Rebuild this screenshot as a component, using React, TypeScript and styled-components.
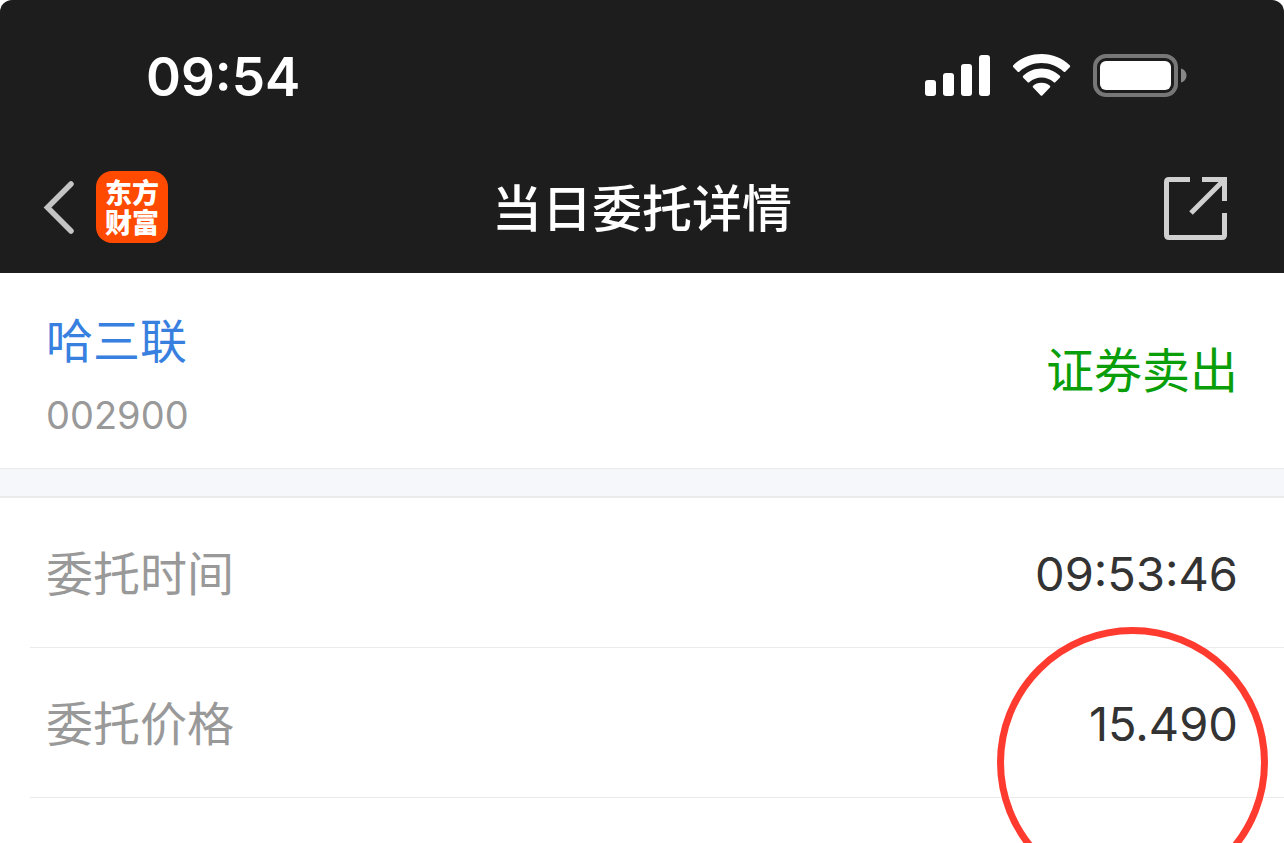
import React from "react";
import styled, { createGlobalStyle } from "styled-components";

const GlobalStyle = createGlobalStyle`
  * { box-sizing: border-box; }
  body {
    margin: 0;
    background: #fff;
    font-family: Inter, "Noto Sans CJK SC", sans-serif;
  }
`;

const Screen = styled.div`
  display: flex;
  flex-direction: column;
  height: 100vh;
  overflow: hidden;
  background: #fff;
`;

const TopArea = styled.header`
  background: #1d1d1d;
  color: #fff;
  border-radius: 12px 12px 0 0;
  flex: none;
`;

const StatusBar = styled.div`
  display: flex;
  align-items: center;
  justify-content: space-between;
  height: 140px;
  padding: 12px 96px 0 146px;
`;

const Clock = styled.time`
  padding-top: 2px;
  font-size: 53px;
  font-weight: 600;
  line-height: 64px;
`;

const StatusIcons = styled.div`
  display: flex;
  align-items: center;
  gap: 22px;
`;

const NavBar = styled.nav`
  display: grid;
  grid-template-columns: 1fr auto 1fr;
  align-items: center;
  height: 133px;
  padding: 0 42px;
`;

const NavLeft = styled.div`
  display: flex;
  align-items: center;
  gap: 20px;
`;

const IconButton = styled.button`
  display: flex;
  padding: 0;
  border: 0;
  background: none;
  color: #d0d0d0;
  cursor: pointer;
`;

const ShareButton = styled(IconButton)`
  justify-self: end;
  padding: 4px 14px 0 0;
`;

const AppLogo = styled.a`
  display: flex;
  flex-direction: column;
  align-items: center;
  justify-content: center;
  width: 72px;
  height: 72px;
  border-radius: 16px;
  background: #ff4a00;
  color: #fff;
  font-family: "Noto Sans CJK SC", sans-serif;
  font-size: 27px;
  font-weight: 900;
  line-height: 30px;
  text-decoration: none;
`;

const Title = styled.h1`
  margin: 0;
  padding-top: 4px;
  font-size: 50px;
  font-weight: 500;
  line-height: 72px;
`;

const Summary = styled.section`
  display: flex;
  align-items: center;
  justify-content: space-between;
  flex: none;
  height: 195px;
  padding: 0 46px;
`;

const StockName = styled.a`
  display: block;
  padding-top: 8px;
  color: #3880df;
  font-size: 47px;
  line-height: 72px;
  text-decoration: none;
`;

const StockCode = styled.div`
  margin-top: 8px;
  color: #999;
  font-size: 38px;
  line-height: 60px;
`;

const Direction = styled.strong`
  color: #0a9f0a;
  font-size: 48px;
  font-weight: 400;
  line-height: 72px;
`;

const Divider = styled.div`
  flex: none;
  height: 30px;
  border-top: 1px solid #ebebeb;
  border-bottom: 2px solid #ebebeb;
  background: #f6f7fa;
`;

const Details = styled.dl`
  margin: 0;
  padding-left: 30px;
`;

const DetailRow = styled.div`
  position: relative;
  display: flex;
  align-items: center;
  justify-content: space-between;
  height: 150px;
  padding: 3px 46px 0 16px;
  border-bottom: 1px solid #ebebeb;
`;

const Label = styled.dt`
  color: #999;
  font-size: 47px;
  line-height: 72px;
`;

const Value = styled.dd`
  margin: 0;
  color: #333;
  font-size: 47px;
  line-height: 72px;
`;

const Highlight = styled.span`
  position: absolute;
  top: -21px;
  right: 16px;
  width: 271px;
  height: 271px;
  border: 7px solid #ff3b30;
  border-radius: 50%;
  pointer-events: none;
`;

const SignalIcon = () => (
  <svg width="66" height="42" viewBox="0 0 66 42" fill="#fff" aria-hidden="true">
    <rect x="0" y="25" width="11" height="16" rx="3" />
    <rect x="18" y="18" width="11" height="23" rx="3" />
    <rect x="36" y="9" width="11" height="32" rx="3" />
    <rect x="54" y="0" width="11" height="41" rx="3" />
  </svg>
);

const WifiIcon = () => (
  <svg width="58" height="44" viewBox="0 0 58 44" fill="#fff" aria-hidden="true">
    <path d="M28.500 0C39.500 0 49.500 4 56.700 11.200Q57.700 12.200 56.700 13.200L52.500 17.600Q51.500 18.600 50.500 17.600C44.500 12 37 9 28.500 9S12.500 12 6.500 17.600Q5.500 18.600 4.500 17.600L.4 13.200Q-.6 12.200.4 11.200C7.500 4 17.500 0 28.500 0Z" />
    <path d="M28.500 14.500C35.800 14.500 42 17.300 46.800 21.700Q47.800 22.700 46.800 23.700L42.500 28Q41.500 29 40.500 28C37 25 33 23.500 28.500 23.500S20 25 16.500 28Q15.500 29 14.500 28L10.200 23.700Q9.200 22.700 10.200 21.700C15 17.300 21.200 14.500 28.500 14.500Z" />
    <path d="M28.500 28.700C32 28.700 34.800 29.900 36.900 31.700Q37.800 32.600 36.900 33.500L29.500 41.200Q28.500 42.200 27.500 41.200L20.100 33.500Q19.200 32.600 20.100 31.700C22.200 29.900 25 28.700 28.500 28.700Z" />
  </svg>
);

const BatteryIcon = () => (
  <svg width="95" height="44" viewBox="0 0 95 44" aria-hidden="true">
    <rect x="2" y="2" width="81" height="39" rx="11" fill="none" stroke="#777" strokeWidth="4" />
    <rect x="7" y="7" width="71" height="29" rx="6" fill="#fff" />
    <path d="M88 14.500C91.500 15.500 93.500 18.500 93.500 21.500S91.500 27.500 88 28.500Z" fill="#888" />
  </svg>
);

const BackIcon = () => (
  <svg width="34" height="54" viewBox="0 0 34 54" fill="none" stroke="#c4c4c4" strokeWidth="5.500" strokeLinecap="round" aria-hidden="true">
    <path d="M29 4L5.500 27.500L29 51" strokeLinejoin="miter" />
  </svg>
);

const ShareIcon = () => (
  <svg width="64" height="64" viewBox="0 0 64 64" fill="none" stroke="currentColor" strokeWidth="5" aria-hidden="true">
    <path d="M26 2.500H5Q2.500 2.500 2.500 5V58Q2.500 60.500 5 60.500H58Q60.500 60.500 60.500 58V36" />
    <path d="M38 2.500H60.500V24M60.500 2.500L27 36" />
  </svg>
);

export default function App() {
  return (
    <Screen>
      <GlobalStyle />
      <TopArea>
        <StatusBar>
          <Clock>09:54</Clock>
          <StatusIcons>
            <SignalIcon />
            <WifiIcon />
            <BatteryIcon />
          </StatusIcons>
        </StatusBar>
        <NavBar>
          <NavLeft>
            <IconButton type="button" aria-label="返回">
              <BackIcon />
            </IconButton>
            <AppLogo href="#">
              <span>东方</span>
              <span>财富</span>
            </AppLogo>
          </NavLeft>
          <Title>当日委托详情</Title>
          <ShareButton type="button" aria-label="分享">
            <ShareIcon />
          </ShareButton>
        </NavBar>
      </TopArea>
      <Summary>
        <div>
          <StockName href="#">哈三联</StockName>
          <StockCode>002900</StockCode>
        </div>
        <Direction>证券卖出</Direction>
      </Summary>
      <Divider />
      <Details>
        <DetailRow>
          <Label>委托时间</Label>
          <Value>09:53:46</Value>
        </DetailRow>
        <DetailRow>
          <Label>委托价格</Label>
          <Value>
            15.490
            <Highlight />
          </Value>
        </DetailRow>
      </Details>
    </Screen>
  );
}
